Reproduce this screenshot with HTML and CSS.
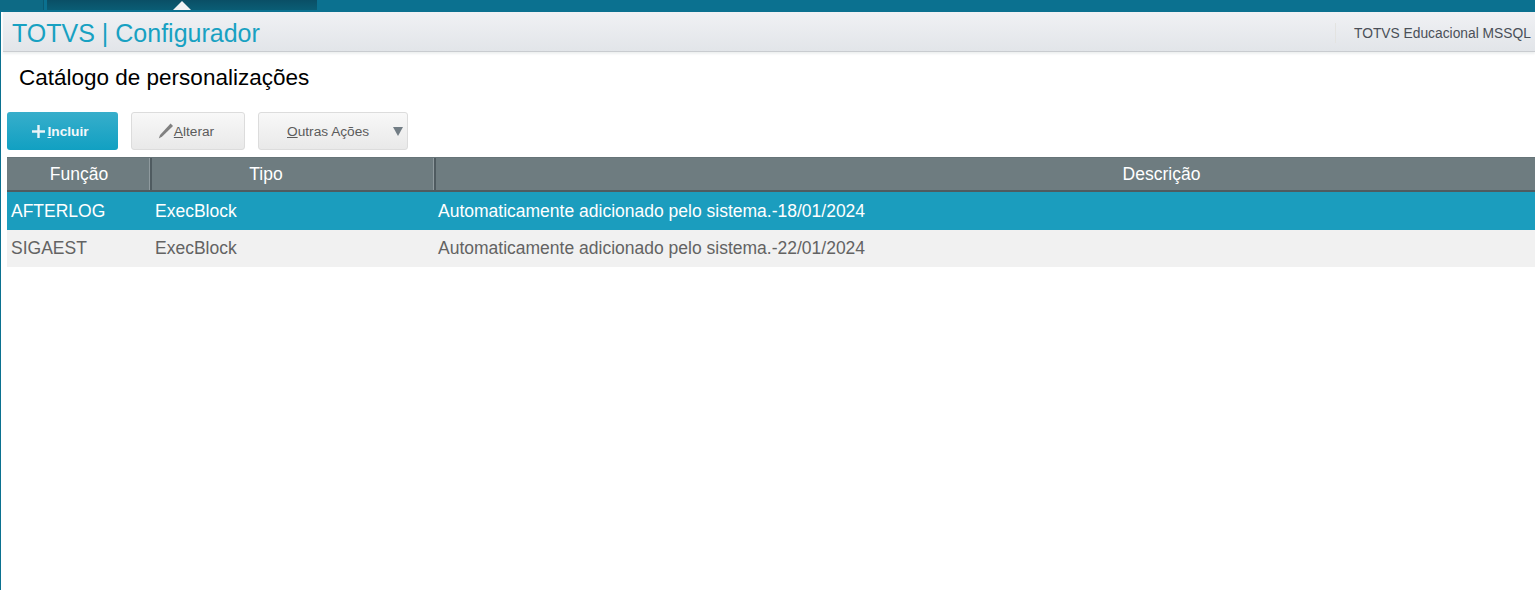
FILE: index.html
```html
<!DOCTYPE html>
<html lang="pt">
<head>
<meta charset="utf-8">
<title>TOTVS | Configurador</title>
<link rel="stylesheet" href="styles.css">
</head>
<body>
<div class="topbar">
  <div class="tab tab-home"></div>
  <div class="tab tab-active"><span class="caret"></span></div>
</div>
<main class="window">
  <header class="appbar">
    <div class="apptitle">TOTVS | Configurador</div>
    <div class="env">TOTVS Educacional MSSQL</div>
  </header>
  <h1 class="pagetitle">Catálogo de personalizações</h1>
  <div class="toolbar">
    <button class="btn btn-primary"><svg class="ico-plus" width="13" height="13" viewBox="0 0 14 14"><path d="M5.7 0h2.6v5.7H14v2.6H8.3V14H5.7V8.3H0V5.7h5.7z" fill="#e8f4f8"/></svg><span><u>I</u>ncluir</span></button>
    <button class="btn btn-edit"><svg class="ico-pen" width="16" height="16" viewBox="0 0 16 16"><path d="M12.6 0.6 15 3 4.2 13.6 0.8 15.6 2 12z" fill="#808080"/></svg><span><u>A</u>lterar</span></button>
    <button class="btn btn-more"><span><u>O</u>utras Ações</span><i class="arrow"></i></button>
  </div>
  <div class="grid">
    <div class="row head">
      <div class="cell c1">Função</div>
      <div class="cell c2">Tipo</div>
      <div class="cell c3">Descrição</div>
    </div>
    <div class="row selected">
      <div class="cell c1">AFTERLOG</div>
      <div class="cell c2">ExecBlock</div>
      <div class="cell c3">Automaticamente adicionado pelo sistema.-18/01/2024</div>
    </div>
    <div class="row alt">
      <div class="cell c1">SIGAEST</div>
      <div class="cell c2">ExecBlock</div>
      <div class="cell c3">Automaticamente adicionado pelo sistema.-22/01/2024</div>
    </div>
  </div>
</main>
</body>
</html>
```
FILE: styles.css
```css
* { box-sizing: border-box; }
html, body { margin: 0; height: 100%; overflow: hidden; }
body {
  background: #0b7190;
  font-family: "Liberation Sans", Arial, sans-serif;
  display: flex;
  flex-direction: column;
}
.topbar { height: 12px; display: flex; flex: none; }
.tab { height: 10px; }
.tab-home { width: 44px; background: #0d6a85; border-right: 1px solid #0a5a72; }
.tab-active {
  width: 270px; margin-left: 3px;
  background: linear-gradient(#0a4f66, #0a5d75);
  display: flex; justify-content: center; align-items: flex-end;
}
.caret {
  width: 0; height: 0;
  border-left: 9px solid transparent;
  border-right: 9px solid transparent;
  border-bottom: 9px solid #f0f2f4;
}
.window {
  flex: 1;
  margin-left: 1px;
  background: #fff;
  min-height: 0;
}
.appbar {
  height: 40px;
  margin-left: 2px;
  padding-top: 3px;
  background: linear-gradient(#f0f1f4, #e2e5e9);
  border-bottom: 1px solid #c9ccd0;
  display: flex;
  align-items: center;
  justify-content: space-between;
  box-shadow: 0 2px 2px #eef0f1;
  white-space: nowrap;
  overflow: hidden;
}
.apptitle { font-size: 25px; color: #18a1c2; margin-left: 9px; }
.env {
  font-size: 13.8px; color: #4a5058;
  width: 200px; height: 20px; line-height: 22px;
  border-left: 1px solid #e3e3e1;
  padding-left: 18px;
  flex: none;
}
.pagetitle {
  font-size: 22.5px; font-weight: 400; color: #000;
  margin: 13px 0 0 18px; line-height: 26px;
}
.toolbar {
  display: flex;
  margin: 21px 0 0 6px;
  height: 38px;
}
.btn {
  font: 13.7px "Liberation Sans", Arial, sans-serif;
  height: 38px;
  border-radius: 3px;
  display: flex; align-items: center; justify-content: center;
  padding: 0;
  color: #5b5b5b;
  border: 1px solid #dcdcdc;
  background: linear-gradient(#f8f8f8, #e9e9e9);
}
.btn-primary {
  width: 111px; color: #f2f8fa; font-weight: 700;
  border: 0;
  padding-right: 4px;
  background: linear-gradient(#37aecb, #11a0c2);
}
.ico-plus { margin-right: 2px; }
.btn-edit { width: 114px; margin-left: 13px; padding-right: 4px; }
.ico-pen { margin-right: 0; }
.btn-more { width: 150px; margin-left: 13px; justify-content: flex-start; padding-left: 28px; }
.arrow {
  margin-left: 24px; width: 0; height: 0;
  border-left: 5.5px solid transparent;
  border-right: 5.5px solid transparent;
  border-top: 9px solid #727d85;
}
.grid { margin: 7px 0 0 6px; font-size: 17.5px; }
.row { display: flex; }
.cell { white-space: nowrap; }
.c1 { width: 143px; padding-left: 4px; }
.c2 { width: 285px; padding-left: 5px; }
.c3 { flex: 1; padding-left: 3px; }
.head {
  height: 35px; line-height: 33px;
  background: #6e7c80; color: #fff;
  border-top: 1px solid #667478;
  border-bottom: 2px solid #4f5b60;
}
.head .cell { text-align: center; padding: 0; }
.head .c1, .head .c2 { border-right: 2px solid #4f5b60; box-shadow: inset -1px 0 0 #8f9a9e; }
.head .c1 { width: 145px; padding-left: 1px; }
.head .c2 { width: 284px; padding-right: 54px; }
.head .c3 { padding-left: 352px; }
.selected { height: 38px; line-height: 38px; background: #1b9dbe; color: #fff; }
.alt { height: 37px; line-height: 36px; background: #f1f1f1; color: #636363; }
```
